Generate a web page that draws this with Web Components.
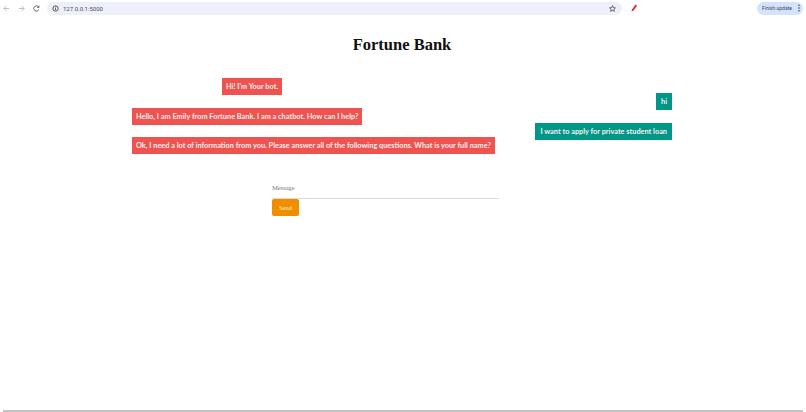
<!DOCTYPE html>
<html>
<head>
<meta charset="utf-8">
<title>Fortune Bank</title>
<style>
    html, body { margin: 0; height: 100%; overflow: hidden; background: #fff; }
</style>
</head>
<body>
<chat-page></chat-page>
<script>
class BrowserBar extends HTMLElement {
    constructor() {
        super();
        this.attachShadow({ mode: 'open' });
    }

    connectedCallback() {
        this.shadowRoot.innerHTML = `
            <style>
                :host { display: flex; align-items: center; height: 16px; font-family: 'Roboto', sans-serif; color: #555a60; }
                svg { display: block; flex: none; }
                .nav { display: flex; gap: 8px; padding-left: 3px; width: 44px; box-sizing: border-box; }
                .url { flex: none; width: 575px; height: 13px; margin-left: 3px; background: #edf0f9; border-radius: 7px; display: flex; align-items: center; box-sizing: border-box; padding: 0 6px 0 5px; font-size: 6px; }
                .url span { margin-left: 4px; flex: 1; color: #4a4e55; }
                .tools { flex: 1; padding-left: 9px; display: flex; align-items: center; }
                .update { flex: none; width: 46px; height: 13px; margin-right: 3px; background: #d3e3fd; border-radius: 7px; display: flex; align-items: center; justify-content: space-between; box-sizing: border-box; padding: 0 3px 0 5px; font-size: 5px; color: #41464d; }
            </style>
            <div class="nav">
                <svg width="7" height="7" viewBox="0 0 8 8" fill="none" stroke="#b4b7bb" stroke-width="1"><path d="M7 4H1M4 1L1 4l3 3"/></svg>
                <svg width="7" height="7" viewBox="0 0 8 8" fill="none" stroke="#b4b7bb" stroke-width="1"><path d="M1 4h6M4 1l3 3-3 3"/></svg>
                <svg width="7" height="7" viewBox="0 0 8 8" fill="none" stroke="#4f5257" stroke-width="1"><path d="M6.6 5.4A3 3 0 1 1 6.4 2.2M6.8 .8v2H4.8"/></svg>
            </div>
            <div class="url">
                <svg width="7" height="7" viewBox="0 0 8 8" fill="none" stroke="#3c4043" stroke-width="1"><circle cx="4" cy="4" r="3"/><path d="M4 3.6v2M4 2v.8"/></svg>
                <span>127.0.0.1:5000</span>
                <svg width="7" height="7" viewBox="0 0 8 8" fill="none" stroke="#3c4043" stroke-width=".9"><path d="M4 .8l1 2.2 2.3.3-1.7 1.6.5 2.3L4 6.1 1.9 7.2l.5-2.300L.7 3.3 3 3z"/></svg>
            </div>
            <div class="tools">
                <svg width="6" height="8" viewBox="0 0 6 8"><path d="M4.500 .5L1 5.500 .6 7.600 2.500 6.500 6 1.800z" fill="#d9252a"/></svg>
            </div>
            <div class="update">
                <span>Finish update</span>
                <svg width="2" height="8" viewBox="0 0 2 8" fill="#41464d"><circle cx="1" cy="1.200" r=".8"/><circle cx="1" cy="4" r=".8"/><circle cx="1" cy="6.800" r=".8"/></svg>
            </div>
        `;
    }
}

class ChatBubble extends HTMLElement {
    constructor() {
        super();
        this.attachShadow({ mode: 'open' });
    }

    static get observedAttributes() {
        return ['variant'];
    }

    connectedCallback() {
        this.render();
    }

    attributeChangedCallback(name, oldValue, newValue) {
        if (oldValue !== newValue) {
            this.render();
        }
    }

    render() {
        const variant = this.getAttribute('variant') || 'bot';

        this.shadowRoot.innerHTML = `
            <style>
                :host { display: block; width: fit-content; }
                div {
                    box-sizing: border-box;
                    height: 17px;
                    line-height: 17px;
                    padding: 0 4px;
                    font-family: 'Lato', sans-serif;
                    font-size: 7.35px;
                    font-weight: 700;
                    white-space: nowrap;
                    color: #fdeeee;
                }
                .bot { background-color: #ef5350; }
                .user { background-color: #009688; padding: 0 5px; }
            </style>
            <div class="${variant}"><slot></slot></div>
        `;
    }
}

class MessageForm extends HTMLElement {
    constructor() {
        super();
        this.attachShadow({ mode: 'open' });
    }

    connectedCallback() {
        this.shadowRoot.innerHTML = `
            <style>
                :host { display: block; width: 227px; font-family: 'Liberation Serif', serif; }
                .field { height: 20px; line-height: 20px; border-bottom: 1px solid #dcdcdc; font-size: 6.5px; color: #777; }
                .send { width: 27px; height: 17px; background: #ef8f00; border-radius: 2px; color: #fbe9cf; font-size: 6.5px; line-height: 17px; text-align: center; }
            </style>
            <div class="field">Message</div>
            <div class="send">Send</div>
        `;
    }
}

class ChatPage extends HTMLElement {
    constructor() {
        super();
        this.attachShadow({ mode: 'open' });
    }

    connectedCallback() {
        this.shadowRoot.innerHTML = `
            <style>
                :host { display: flex; flex-direction: column; height: 412px; overflow: hidden; background: #fff; }
                main { flex: 1; display: flex; flex-direction: column; align-items: center; }
                h1 { margin: 19px 2px 0 0; font-family: 'Liberation Serif', serif; font-size: 16.5px; line-height: 20px; font-weight: 700; color: #111; }
                .chat { width: 540px; margin: 23px 2px 0 0; display: flex; justify-content: space-between; align-items: flex-start; }
                .col { display: flex; flex-direction: column; gap: 12.5px; }
                .right { align-items: flex-end; padding-top: 15px; }
                .first { margin-left: 90px; }
                message-form { margin: 24px 35px 0 0; }
                .scroll { flex: none; height: 2px; background: #c4c4c4; margin: 0 3px; }
            </style>
            <browser-bar></browser-bar>
            <main>
                <h1>Fortune Bank</h1>
                <div class="chat">
                    <div class="col">
                        <chat-bubble class="first">Hi! I'm Your bot.</chat-bubble>
                        <chat-bubble>Hello, I am Emily from Fortune Bank. I am a chatbot. How can I help?</chat-bubble>
                        <chat-bubble>Ok, I need a lot of information from you. Please answer all of the following questions. What is your full name?</chat-bubble>
                    </div>
                    <div class="col right">
                        <chat-bubble variant="user">hi</chat-bubble>
                        <chat-bubble variant="user">I want to apply for private student loan</chat-bubble>
                    </div>
                </div>
                <message-form></message-form>
            </main>
            <div class="scroll"></div>
        `;
    }
}

customElements.define('browser-bar', BrowserBar);
customElements.define('chat-bubble', ChatBubble);
customElements.define('message-form', MessageForm);
customElements.define('chat-page', ChatPage);
</script>
</body>
</html>
